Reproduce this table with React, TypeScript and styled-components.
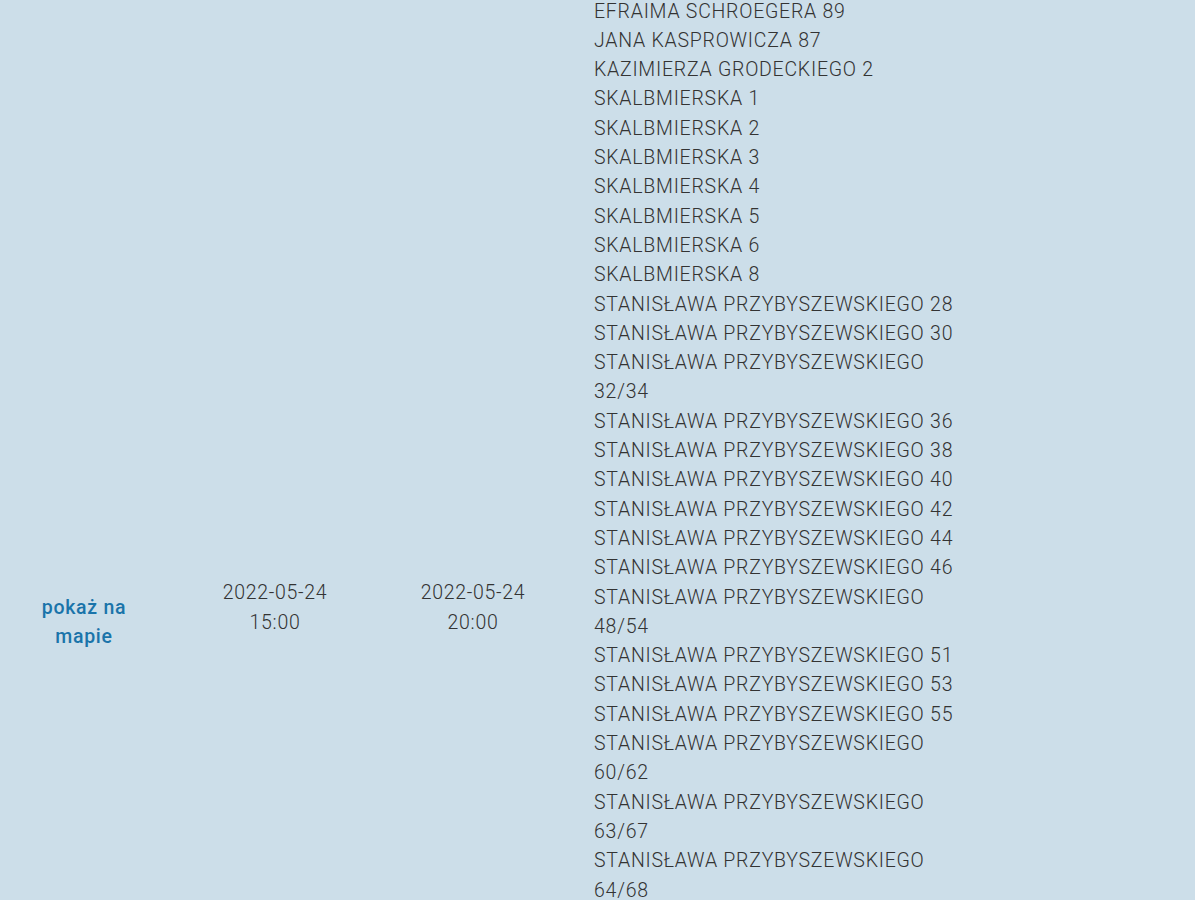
import React from 'react';
import styled, {createGlobalStyle} from 'styled-components';

const GlobalStyle = createGlobalStyle`
    html, body {
        margin: 0;
        padding: 0;
        background: #ccdee9;
    }
    body {
        font-family: Roboto, "Noto Sans", "Liberation Sans", sans-serif;
        color: #333;
        overflow: hidden;
    }
`

const Page = styled.div`
    width: 100%;
    height: 900px;
    overflow: hidden;
    background: #ccdee9;
`

// the page is shown scrolled a bit, the row starts above the window
const Row = styled.div`
    display: grid;
    grid-template-columns: 168px 214px 182px 1fr;
    align-items: center;
    margin-top: -62px;
`

const LinkCell = styled.div`
    text-align: center;
    padding-top: 21px;
`

const MapLink = styled.a`
    display: inline-block;
    max-width: 100px;
    color: #1a74aa;
    font-size: 19.5px;
    font-weight: 500;
    letter-spacing: 0.7px;
    line-height: 29.5px;
    text-decoration: none;
    cursor: pointer;
`

const DateCell = styled.div`
    text-align: center;
    font-size: 19.5px;
    font-weight: 300;
    letter-spacing: 0.7px;
    line-height: 29.8px;
    padding-bottom: 8px;
`

const DateText = styled.span`
    display: inline-block;
    max-width: 120px;
`

const AddressCell = styled.div`
    padding-left: 30px;
`

const AddressList = styled.ul`
    list-style: none;
    margin: 0;
    padding: 0;
    max-width: 375px;
    font-size: 19.5px;
    font-weight: 300;
    letter-spacing: 0.75px;
    line-height: 29.3px;
    text-transform: uppercase;
`

const Address = styled.li``

const addresses = [
    'EFRAIMA SCHROEGERA 85',
    'EFRAIMA SCHROEGERA 87',
    'EFRAIMA SCHROEGERA 89',
    'JANA KASPROWICZA 87',
    'KAZIMIERZA GRODECKIEGO 2',
    'SKALBMIERSKA 1',
    'SKALBMIERSKA 2',
    'SKALBMIERSKA 3',
    'SKALBMIERSKA 4',
    'SKALBMIERSKA 5',
    'SKALBMIERSKA 6',
    'SKALBMIERSKA 8',
    'STANISŁAWA PRZYBYSZEWSKIEGO 28',
    'STANISŁAWA PRZYBYSZEWSKIEGO 30',
    'STANISŁAWA PRZYBYSZEWSKIEGO 32/34',
    'STANISŁAWA PRZYBYSZEWSKIEGO 36',
    'STANISŁAWA PRZYBYSZEWSKIEGO 38',
    'STANISŁAWA PRZYBYSZEWSKIEGO 40',
    'STANISŁAWA PRZYBYSZEWSKIEGO 42',
    'STANISŁAWA PRZYBYSZEWSKIEGO 44',
    'STANISŁAWA PRZYBYSZEWSKIEGO 46',
    'STANISŁAWA PRZYBYSZEWSKIEGO 48/54',
    'STANISŁAWA PRZYBYSZEWSKIEGO 51',
    'STANISŁAWA PRZYBYSZEWSKIEGO 53',
    'STANISŁAWA PRZYBYSZEWSKIEGO 55',
    'STANISŁAWA PRZYBYSZEWSKIEGO 60/62',
    'STANISŁAWA PRZYBYSZEWSKIEGO 63/67',
    'STANISŁAWA PRZYBYSZEWSKIEGO 64/68',
    'STANISŁAWA PRZYBYSZEWSKIEGO 65',
    'STANISŁAWA PRZYBYSZEWSKIEGO 66',
    'STANISŁAWA PRZYBYSZEWSKIEGO 70',
    'STANISŁAWA PRZYBYSZEWSKIEGO 72',
    'STANISŁAWA PRZYBYSZEWSKIEGO 74',
    'STANISŁAWA PRZYBYSZEWSKIEGO 76',
    'STANISŁAWA PRZYBYSZEWSKIEGO 78',
    'STANISŁAWA PRZYBYSZEWSKIEGO 80',
    'STANISŁAWA PRZYBYSZEWSKIEGO 82',
    'STANISŁAWA PRZYBYSZEWSKIEGO 84',
    'STANISŁAWA PRZYBYSZEWSKIEGO 86',
    'STANISŁAWA PRZYBYSZEWSKIEGO 88',
    'STANISŁAWA PRZYBYSZEWSKIEGO 90',
]

const App = () => {
    return (
        <Page>
            <GlobalStyle/>
            <Row>
                <LinkCell>
                    <MapLink>pokaż na mapie</MapLink>
                </LinkCell>
                <DateCell>
                    <DateText>2022-05-24 15:00</DateText>
                </DateCell>
                <DateCell>
                    <DateText>2022-05-24 20:00</DateText>
                </DateCell>
                <AddressCell>
                    <AddressList>
                        {addresses.map((a, i) => (
                            <Address key={i}>{a}</Address>
                        ))}
                    </AddressList>
                </AddressCell>
            </Row>
        </Page>
    )
};

export default App;
